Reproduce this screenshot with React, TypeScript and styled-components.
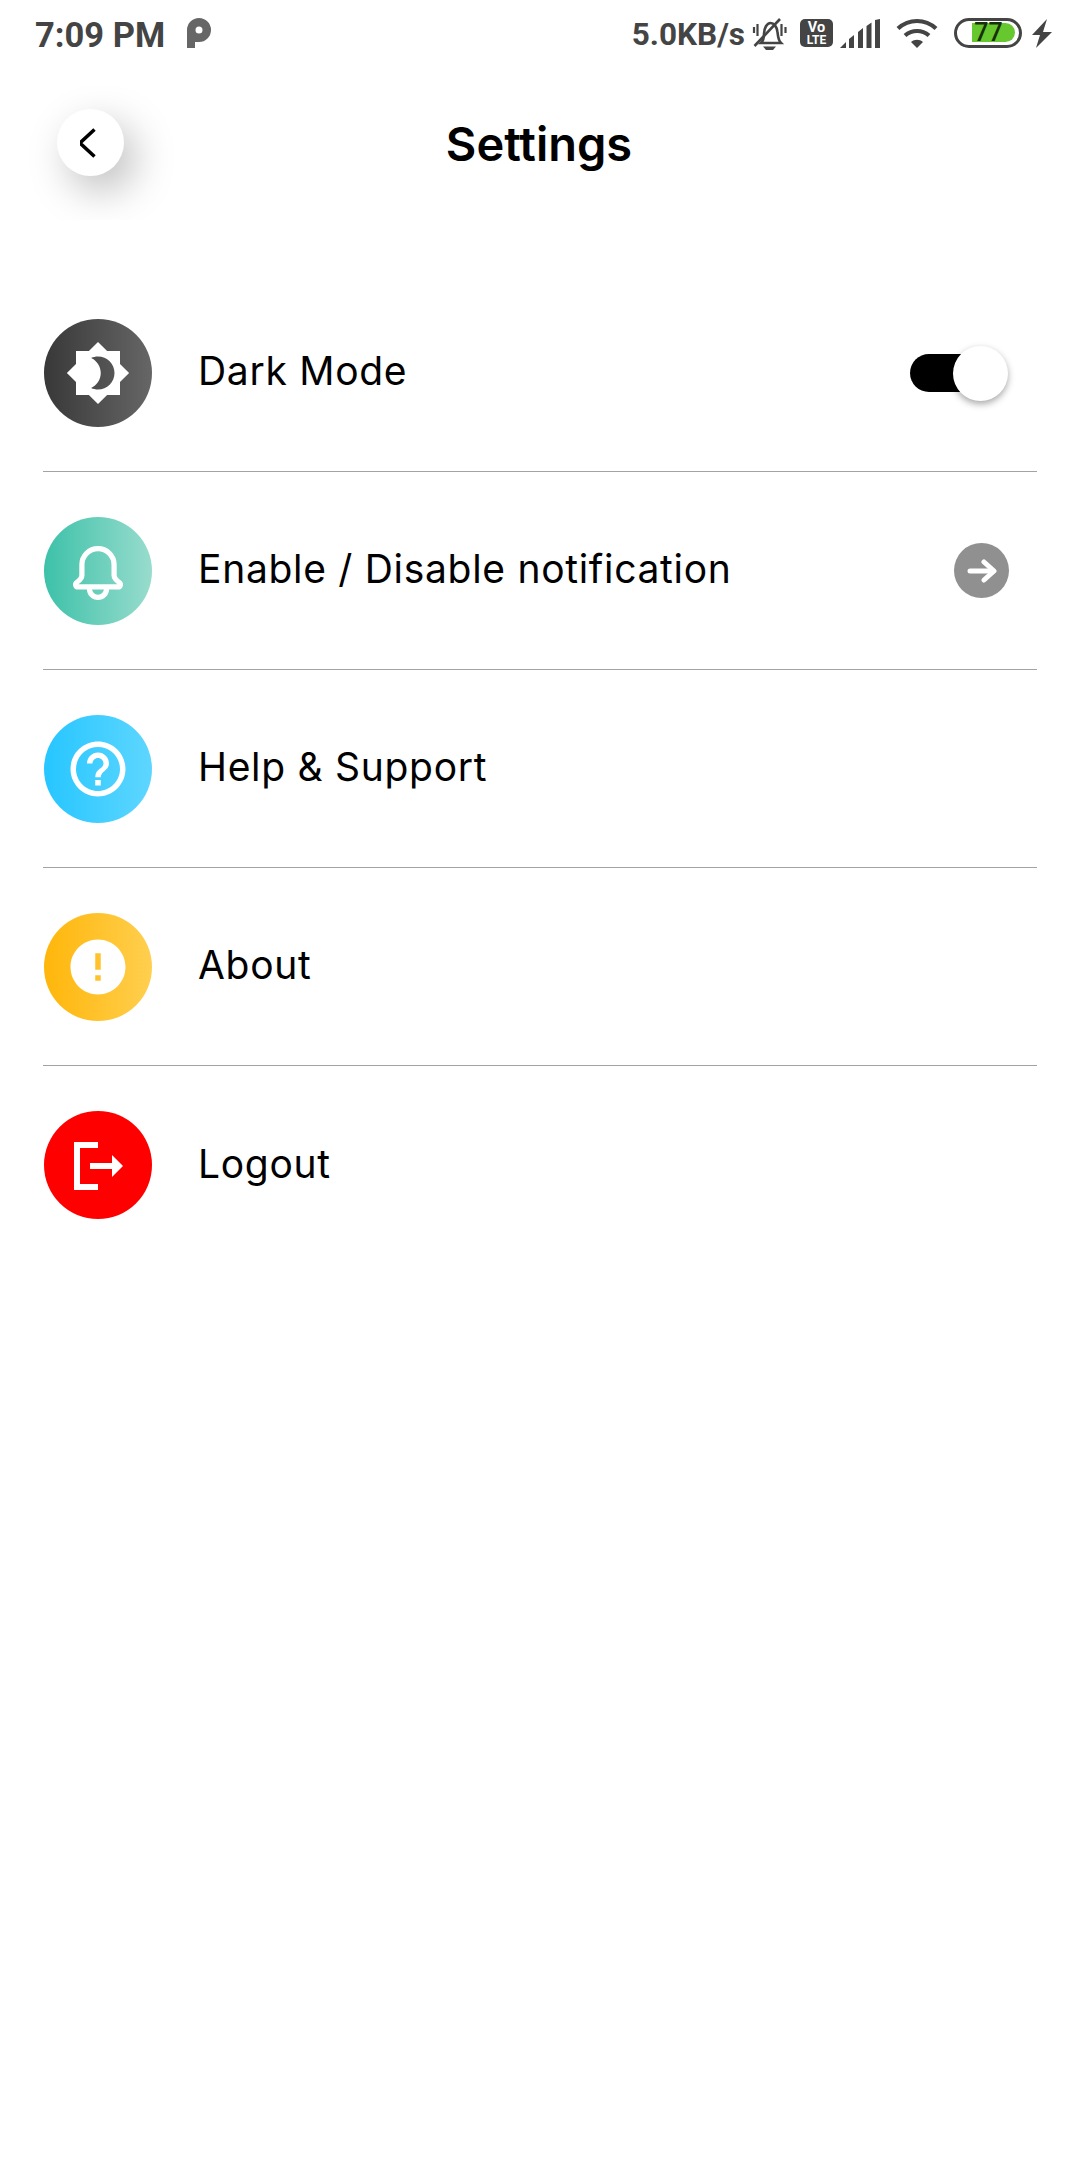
import React from "react";
import styled, { createGlobalStyle } from "styled-components";

const GlobalStyle = createGlobalStyle`
  html, body {
    margin: 0;
    padding: 0;
    background: #fff;
    font-family: "Inter", "Liberation Sans", sans-serif;
  }
`;

const Screen = styled.div`
  width: 1080px;
  height: 2160px;
  background: #fff;
  overflow: hidden;
`;

const StatusBar = styled.div`
  height: 70px;
  padding: 0 28px 0 35px;
  display: flex;
  align-items: center;
  justify-content: space-between;
  font-family: "Roboto", "Liberation Sans", sans-serif;
  font-weight: 700;
  color: #444;
`;

const StatusGroup = styled.div`
  display: flex;
  align-items: center;
`;

const StatusText = styled.span<{ $size: number }>`
  font-size: ${(p) => p.$size}px;
  line-height: 70px;
  white-space: nowrap;
`;

const StatusIcon = styled.svg<{ $left?: number; $lift?: number }>`
  display: block;
  flex: none;
  margin-left: ${(p) => p.$left ?? 0}px;
  margin-bottom: ${(p) => p.$lift ?? 4}px;
`;

const Header = styled.header`
  height: 150px;
  margin-bottom: 54px;
  display: grid;
  grid-template-columns: 1fr auto 1fr;
  align-items: start;
`;

const BackClip = styled.div`
  width: 170px;
  height: 142px;
  margin: 8px 0 0 25px;
  padding: 31px 0 0 32px;
  box-sizing: border-box;
  overflow: hidden;
`;

const BackButton = styled.button`
  width: 67px;
  height: 67px;
  padding: 0;
  border: none;
  border-radius: 50%;
  background: #fff;
  box-shadow: 11px 15px 40px rgba(0, 0, 0, 0.26);
  display: flex;
  align-items: center;
  justify-content: center;
`;

const Title = styled.h1`
  margin: 0 2px 0 0;
  padding-top: 46px;
  font-size: 47px;
  line-height: 56px;
  font-weight: 600;
  color: #000;
`;

const List = styled.ul`
  list-style: none;
  margin: 0;
  padding: 0 43px;
`;

const Row = styled.li`
  height: 198px;
  box-sizing: border-box;
  display: flex;
  align-items: center;
  padding-right: 28px;
  border-bottom: 1.5px solid #a3a3a3;

  &:last-child {
    border-bottom: none;
  }
`;

const IconCircle = styled.div<{ $from: string; $to: string }>`
  width: 108px;
  height: 108px;
  margin-left: 1px;
  flex: none;
  border-radius: 50%;
  background: linear-gradient(to right, ${(p) => p.$from}, ${(p) => p.$to});
  display: flex;
  align-items: center;
  justify-content: center;
  color: #fff;
`;

const Label = styled.span`
  flex: 1;
  margin: -3px 0 0 46px;
  font-size: 39px;
  line-height: 50px;
  letter-spacing: 0.7px;
  color: #000;
`;

const Track = styled.div`
  position: relative;
  width: 81px;
  height: 38px;
  margin-right: 18px;
  border-radius: 19px;
  background: #000;
`;

const Knob = styled.div`
  position: absolute;
  top: -8px;
  right: -17px;
  width: 55px;
  height: 55px;
  border-radius: 50%;
  background: #fff;
  box-shadow: 0 3px 7px rgba(0, 0, 0, 0.35);
`;

const ArrowBadge = styled.div`
  width: 55px;
  height: 55px;
  border-radius: 50%;
  background: #909090;
  display: flex;
  align-items: center;
  justify-content: center;
`;

const Glyph: React.FC<{ d: string }> = ({ d }) => (
  <svg width="66" height="66" viewBox="0 0 24 24" fill="currentColor">
    <path d={d} />
  </svg>
);

const BellIcon = () => (
  <svg width="66" height="66" viewBox="0 0 24 24" fill="none" stroke="currentColor" strokeWidth="1.9" strokeLinejoin="round">
    <path d="M12 3.85a5.85 5.85 0 0 0-5.85 5.85V13.500c0 1-1 2-1.900 2.700-.7.5-.4 1.600.4 1.600h14.700c.8 0 1.100-1.100.4-1.600-.9-.7-1.900-1.700-1.900-2.700V9.700A5.85 5.85 0 0 0 12 3.85z" />
    <path d="M8.900 18.500a3.100 3.100 0 0 0 6.200 0" />
  </svg>
);

const LogoutIcon = () => (
  <svg width="66" height="66" viewBox="0 0 66 66" fill="none" stroke="currentColor" strokeWidth="6">
    <path d="M33 13H12V55H33" />
    <path d="M25 34H48" />
    <path d="M47 23L58 34L47 45Z" fill="currentColor" stroke="none" />
  </svg>
);

const rows = [
  {
    label: "Dark Mode",
    from: "#383838",
    to: "#666666",
    icon: <Glyph d="M20 8.69V4h-4.69L12 .69 8.69 4H4v4.69L.69 12 4 15.31V20h4.69L12 23.31 15.31 20H20v-4.69L23.31 12 20 8.69zM12 18c-.89 0-1.74-.2-2.5-.55C11.56 16.5 13 14.42 13 12s-1.44-4.5-3.5-5.45C10.26 6.2 11.11 6 12 6c3.31 0 6 2.69 6 6s-2.69 6-6 6z" />,
    trailing: "switch",
  },
  {
    label: "Enable / Disable notification",
    from: "#3dc1a9",
    to: "#98dccd",
    icon: <BellIcon />,
    trailing: "arrow",
  },
  {
    label: "Help & Support",
    from: "#26c6ff",
    to: "#5ed6ff",
    icon: <Glyph d="M11 18h2v-2h-2v2zm1-16C6.48 2 2 6.48 2 12s4.48 10 10 10 10-4.48 10-10S17.52 2 12 2zm0 18c-4.41 0-8-3.59-8-8s3.59-8 8-8 8 3.59 8 8-3.59 8-8 8zm0-14c-2.21 0-4 1.79-4 4h2c0-1.1.9-2 2-2s2 .9 2 2c0 2-3 1.75-3 5h2c0-2.25 3-2.5 3-5 0-2.21-1.79-4-4-4z" />,
  },
  {
    label: "About",
    from: "#ffb60a",
    to: "#ffcf4f",
    icon: <Glyph d="M12 2C6.48 2 2 6.48 2 12s4.48 10 10 10 10-4.48 10-10S17.52 2 12 2zm1 15h-2v-2h2v2zm0-4h-2V7h2v6z" />,
  },
  {
    label: "Logout",
    from: "#ff0000",
    to: "#ff0000",
    icon: <LogoutIcon />,
  },
];

export default function App() {
  return (
    <Screen>
      <GlobalStyle />
      <StatusBar>
        <StatusGroup>
          <StatusText $size={34.5}>7:09 PM</StatusText>
          <StatusIcon $left={22} width="24" height="30" viewBox="0 0 24 30">
            <path fillRule="evenodd" fill="#666" d="M0 30V12A12 12 0 1 1 12 24H8V30ZM12 8.500A3.500 3.500 0 1 0 12 15.500A3.500 3.500 0 1 0 12 8.500Z" />
          </StatusIcon>
        </StatusGroup>
        <StatusGroup>
          <StatusText $size={31.5}>5.0KB/s</StatusText>
          <StatusIcon $left={7} $lift={2} width="36" height="34" viewBox="0 0 36 34" fill="none" stroke="#444" strokeWidth="2.6">
            <path d="M9 26c2-2 3-4 3-9 0-6 3-11 6.500-11s6.500 4 7 9c.5 4 .5 8 3.500 11z" />
            <path d="M11 29.500h13l-3 3.500h-7z" fill="#444" stroke="none" />
            <path d="M2.500 29L28 2" />
            <path d="M2 10v6M5.500 7v12M29.500 7v12M33.500 10v6" strokeWidth="2.200" />
          </StatusIcon>
          <StatusIcon $left={12} width="33" height="28" viewBox="0 0 33 28">
            <rect width="33" height="28" rx="5" fill="#444" />
            <text x="16.5" y="12.500" textAnchor="middle" fontFamily="Roboto" fontWeight="700" fontSize="14.500" fill="#fff">Vo</text>
            <text x="16.5" y="24.500" textAnchor="middle" fontFamily="Roboto" fontWeight="700" fontSize="12" fill="#fff">LTE</text>
          </StatusIcon>
          <StatusIcon $left={7} width="40" height="29" viewBox="0 0 40 29" fill="#444">
            <path d="M0 29L6 23V29Z" />
            <path d="M9 29V20L14 16V29Z" />
            <path d="M18 29V13L23 9V29Z" />
            <path d="M26.500 29V7L31.500 3.500V29Z" />
            <path d="M35 29V1L40 0V29Z" />
          </StatusIcon>
          <StatusIcon $left={16} width="42" height="31" viewBox="0 0 42 31" fill="none" stroke="#444" strokeWidth="4.2">
            <path d="M2 10.5c11-10 27-10 38 0" />
            <path d="M9 17.5c7-6 17-6 24 0" />
            <path d="M21 30l-6-6c3.500-3 8.500-3 12 0z" fill="#444" stroke="none" />
          </StatusIcon>
          <StatusIcon $left={16} width="68" height="30" viewBox="0 0 68 30">
            <rect x="1.500" y="1.500" width="65" height="27" rx="13.500" fill="none" stroke="#444" strokeWidth="3" />
            <path d="M18 5H51.500a9.500 9.500 0 0 1 0 19H18Z" fill="#66c72e" />
            <text x="34.500" y="23" textAnchor="middle" fontFamily="Roboto" fontWeight="500" fontSize="25" fill="#16300c">77</text>
          </StatusIcon>
          <StatusIcon $left={10} width="20" height="29" viewBox="0 0 20 29" fill="#444">
            <path d="M15 0L0 16H8L4 29L20 13H11Z" />
          </StatusIcon>
        </StatusGroup>
      </StatusBar>
      <Header>
        <BackClip>
          <BackButton aria-label="Back">
            <svg width="22" height="32" viewBox="0 0 22 32" fill="none" stroke="#000" strokeWidth="3.500">
              <path d="M18.500 2.500L4 16L18.500 29.500" transform="translate(-4 0)" />
            </svg>
          </BackButton>
        </BackClip>
        <Title>Settings</Title>
      </Header>
      <List>
        {rows.map((row) => (
          <Row key={row.label}>
            <IconCircle $from={row.from} $to={row.to}>
              {row.icon}
            </IconCircle>
            <Label>{row.label}</Label>
            {row.trailing === "switch" && (
              <Track>
                <Knob />
              </Track>
            )}
            {row.trailing === "arrow" && (
              <ArrowBadge>
                <svg width="30" height="24" viewBox="0 0 30 24" fill="none" stroke="#fff" strokeWidth="5" strokeLinecap="round" strokeLinejoin="round">
                  <path d="M3 12H26" />
                  <path d="M17 3L27 12L17 21" />
                </svg>
              </ArrowBadge>
            )}
          </Row>
        ))}
      </List>
    </Screen>
  );
}
